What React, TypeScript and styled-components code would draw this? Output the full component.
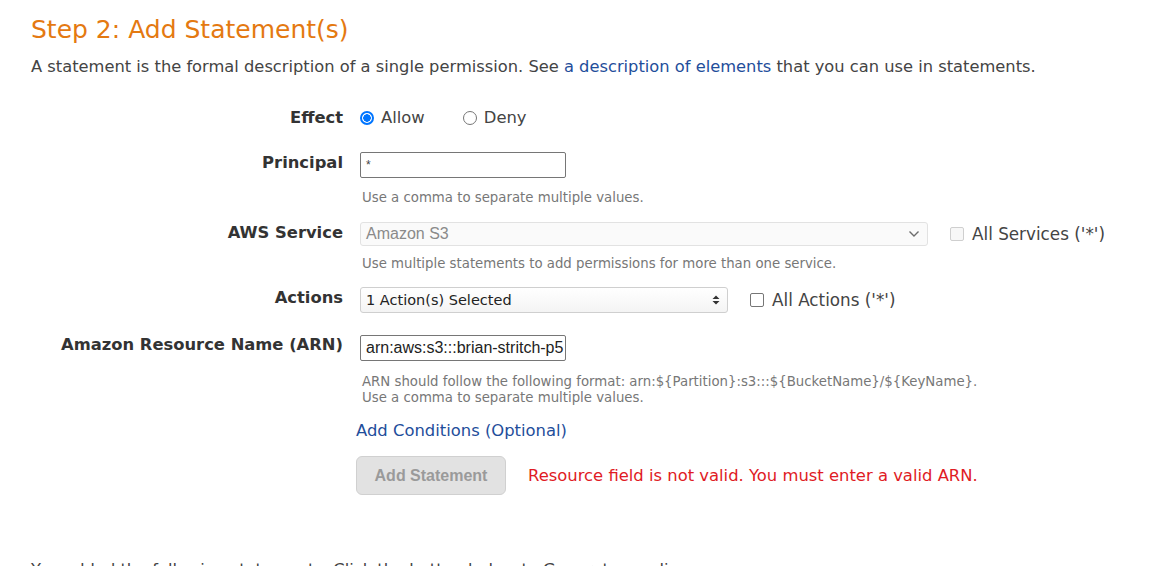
import React from "react";
import styled, { createGlobalStyle } from "styled-components";

const Global = createGlobalStyle`
  html, body { margin: 0; padding: 0; background: #fff; }
  body { font-family: "DejaVu Sans", Verdana, sans-serif; color: #444; overflow: hidden; }
`;

const Page = styled.div`
  padding: 14px 0 0 31px;
  width: 1121px;
`;

const Heading = styled.h2`
  margin: 0;
  font-size: 25px;
  font-weight: normal;
  color: #e47911;
  line-height: 32px;
`;

const Intro = styled.p`
  margin: 11px 0 0;
  font-size: 16.3px;
  line-height: 20px;
  color: #444;
`;

const Link = styled.a`
  color: #1f4e9b;
  text-decoration: none;
  cursor: pointer;
`;

const Form = styled.div`
  display: grid;
  grid-template-columns: 312px auto;
  column-gap: 17px;
  align-items: start;
`;

const Label = styled.div<{ $mt: number }>`
  margin-top: ${(p) => p.$mt}px;
  text-align: right;
  font-weight: bold;
  font-size: 16.35px;
  line-height: 20px;
  color: #333;
`;

const Cell = styled.div<{ $mt: number }>`
  margin-top: ${(p) => p.$mt}px;
  display: flex;
  flex-direction: column;
  align-items: flex-start;
`;

const Line = styled.div`
  display: flex;
  align-items: center;
`;

const RadioLabel = styled.label`
  display: inline-flex;
  align-items: center;
  gap: 7px;
  font-size: 16.4px;
  line-height: 20px;
  color: #444;
  margin-right: 38px;
`;

const RadioDot = styled.span<{ $on?: boolean }>`
  width: 14px;
  height: 14px;
  border-radius: 50%;
  box-sizing: border-box;
  border: ${(p) => (p.$on ? "2px solid #0075ff" : "1px solid #767676")};
  background: ${(p) => (p.$on ? "radial-gradient(circle, #0075ff 0 3.5px, #fff 4px)" : "#fff")};
`;

const TextBox = styled.div<{ $w: number }>`
  width: ${(p) => p.$w}px;
  height: 26px;
  box-sizing: border-box;
  border: 1px solid #767676;
  border-radius: 2px;
  padding: 2px 5px 0;
  font-family: "Liberation Sans", Arial, sans-serif;
  font-size: 16px;
  line-height: 20px;
  color: #222;
  white-space: nowrap;
  overflow: hidden;
  background: #fff;
`;

const Star = styled.span`
  font-size: 12px;
  color: #444;
  vertical-align: top;
`;

const Help = styled.div<{ $mt: number }>`
  margin-top: ${(p) => p.$mt}px;
  margin-left: 2px;
  font-size: 13.3px;
  line-height: 16px;
  color: #777;
`;

const SelectBox = styled.div<{ $w: number; $disabled?: boolean }>`
  width: ${(p) => p.$w}px;
  height: ${(p) => (p.$disabled ? 24 : 26)}px;
  box-sizing: border-box;
  display: flex;
  align-items: center;
  justify-content: space-between;
  padding: 0 7px 0 5px;
  border: 1px solid ${(p) => (p.$disabled ? "#e2e2e2" : "#cfcfcf")};
  border-radius: 3px;
  background: ${(p) => (p.$disabled ? "#fafafa" : "linear-gradient(#fff, #f4f4f4)")};
  font-family: ${(p) => (p.$disabled ? '"Liberation Sans", Arial, sans-serif' : '"DejaVu Sans", Verdana, sans-serif')};
  font-size: ${(p) => (p.$disabled ? 16 : 14.5)}px;
  color: ${(p) => (p.$disabled ? "#8a8a8a" : "#222")};
`;

const CheckLabel = styled.label<{ $ml: number }>`
  display: inline-flex;
  align-items: center;
  gap: 8px;
  margin-left: ${(p) => p.$ml}px;
  font-size: 16.8px;
  line-height: 20px;
  color: #444;
`;

const CheckBox = styled.span<{ $disabled?: boolean }>`
  width: 14px;
  height: 14px;
  box-sizing: border-box;
  border-radius: 2px;
  border: 1px solid ${(p) => (p.$disabled ? "#cfcfcf" : "#767676")};
  background: ${(p) => (p.$disabled ? "#f7f7f7" : "#fff")};
`;

const Actions = styled.div`
  margin: 15px 0 0 325px;
  display: flex;
  flex-direction: column;
  align-items: flex-start;
`;

const CondLink = styled(Link)`
  font-size: 16.4px;
  line-height: 20px;
`;

const ButtonRow = styled.div`
  margin-top: 15px;
  display: flex;
  align-items: center;
  gap: 22px;
`;

const Button = styled.button`
  width: 150px;
  height: 39px;
  border: 1px solid #d0d0d0;
  border-radius: 6px;
  background: #e2e2e2;
  color: #9a9a9a;
  font-family: "Liberation Sans", Arial, sans-serif;
  font-weight: bold;
  font-size: 16px;
  padding: 0;
`;

const ErrorText = styled.span`
  font-size: 16.4px;
  color: #e01b24;
`;

const Footer = styled.p`
  margin: 65px 0 0;
  font-size: 16.3px;
  line-height: 20px;
  color: #444;
`;

const Chevron = () => (
  <svg width="12" height="8" viewBox="0 0 12 8">
    <path d="M1.5 1.5 L6 6 L10.5 1.5" fill="none" stroke="#6d6d6d" strokeWidth="1.4" />
  </svg>
);

const UpDown = () => (
  <svg width="8" height="10" viewBox="0 0 8 10">
    <path d="M4 0.5 L7.5 4 H0.5 Z M4 9.5 L0.5 6 H7.5 Z" fill="#333" />
  </svg>
);

export default function App() {
  return (
    <>
      <Global />
      <Page>
        <Heading>Step 2: Add Statement(s)</Heading>
        <Intro>
          A statement is the formal description of a single permission. See{" "}
          <Link>a description of elements</Link> that you can use in statements.
        </Intro>
        <Form>
          <Label $mt={31}>Effect</Label>
          <Cell $mt={31}>
            <Line>
              <RadioLabel>
                <RadioDot $on />
                Allow
              </RadioLabel>
              <RadioLabel>
                <RadioDot />
                Deny
              </RadioLabel>
            </Line>
          </Cell>

          <Label $mt={25}>Principal</Label>
          <Cell $mt={24}>
            <TextBox $w={206}>
              <Star>*</Star>
            </TextBox>
            <Help $mt={12}>Use a comma to separate multiple values.</Help>
          </Cell>

          <Label $mt={17}>AWS Service</Label>
          <Cell $mt={16}>
            <Line>
              <SelectBox $w={568} $disabled>
                <span>Amazon S3</span>
                <Chevron />
              </SelectBox>
              <CheckLabel $ml={22}>
                <CheckBox $disabled />
                All Services ('*')
              </CheckLabel>
            </Line>
            <Help $mt={10}>Use multiple statements to add permissions for more than one service.</Help>
          </Cell>

          <Label $mt={16}>Actions</Label>
          <Cell $mt={15}>
            <Line>
              <SelectBox $w={368}>
                <span>1 Action(s) Selected</span>
                <UpDown />
              </SelectBox>
              <CheckLabel $ml={22}>
                <CheckBox />
                All Actions ('*')
              </CheckLabel>
            </Line>
          </Cell>

          <Label $mt={22}>Amazon Resource Name (ARN)</Label>
          <Cell $mt={22}>
            <TextBox $w={206}>arn:aws:s3:::brian-stritch-p5</TextBox>
            <Help $mt={13}>
              ARN should follow the following format: arn:$&#123;Partition&#125;:s3:::$&#123;BucketName&#125;/$&#123;KeyName&#125;.
              <br />
              Use a comma to separate multiple values.
            </Help>
          </Cell>
        </Form>
        <Actions>
          <CondLink>Add Conditions (Optional)</CondLink>
          <ButtonRow>
            <Button disabled>Add Statement</Button>
            <ErrorText>Resource field is not valid. You must enter a valid ARN.</ErrorText>
          </ButtonRow>
        </Actions>
        <Footer>You added the following statements. Click the button below to Generate a policy.</Footer>
      </Page>
    </>
  );
}
